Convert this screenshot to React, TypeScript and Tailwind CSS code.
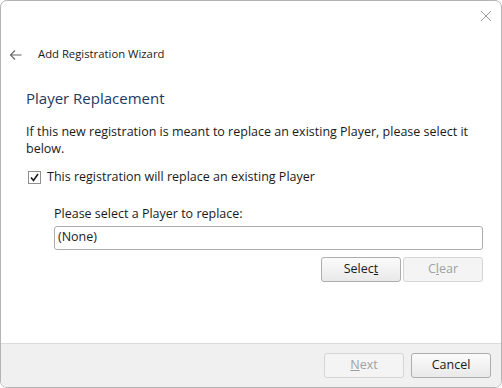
import React, { useState } from 'react';

const font = { fontFamily: '"Open Sans", "Noto Sans", sans-serif' };

const Btn: React.FC<{ children: React.ReactNode; disabled?: boolean }> = ({ children, disabled }) => (
  <button
    className={`w-[80px] h-[25px] rounded-[3px] border text-[12.5px] leading-none flex items-center justify-center ${
      disabled
        ? 'border-[#d5d5d5] bg-[#f4f4f4] text-[#a0a0a0]'
        : 'border-[#adadad] bg-gradient-to-b from-[#fbfbfb] to-[#e9e9e9] text-[#1a1a1a]'
    }`}
  >
    {children}
  </button>
);

export default function App() {
  const [checked, setChecked] = useState(true);

  return (
    <div className="w-[502px] h-[388px] bg-white" style={font}>
      <div className="w-full h-full flex flex-col border border-[#b4b4b4] rounded-t-[7px] rounded-b-[7px] overflow-hidden bg-white">
        {/* caption */}
        <div className="h-[37px] flex justify-end items-start pr-[9px] pt-[9px]">
          <svg width="12" height="12" viewBox="0 0 12 12" className="text-[#9a9a9a]">
            <path d="M1 1 L11 11 M11 1 L1 11" stroke="currentColor" strokeWidth="1" fill="none" />
          </svg>
        </div>

        {/* header */}
        <div className="h-[42px] flex items-center pl-[8px] pb-[9px]">
          <svg width="13" height="12" viewBox="0 0 13 12" className="text-[#666]">
            <path d="M12.5 6 H1.5 M6 1.5 L1.5 6 L6 10.5" stroke="currentColor" strokeWidth="1.1" fill="none" />
          </svg>
          <span className="ml-[16px] text-[11.3px] text-[#1a1a1a]">Add Registration Wizard</span>
        </div>

        {/* body */}
        <div className="flex-1 pl-[25px] pr-[18px]">
          <h2 className="text-[15px] leading-[20px] text-[#1c3a63] pt-[8px]">Player Replacement</h2>

          <p className="mt-[15px] text-[12.5px] leading-[17px] text-[#1a1a1a]">
            If this new registration is meant to replace an existing Player, please select it below.
          </p>

          <label className="mt-[11px] flex items-center gap-[6px] text-[12.5px] text-[#1a1a1a]">
            <span
              onClick={() => setChecked(!checked)}
              className="ml-[2px] w-[13px] h-[13px] border border-[#8f8f8f] bg-white flex items-center justify-center"
            >
              {checked && (
                <svg width="9" height="9" viewBox="0 0 9 9">
                  <path d="M1 4.5 L3.5 7.5 L8 1" stroke="#1a1a1a" strokeWidth="1.6" fill="none" />
                </svg>
              )}
            </span>
            This registration will replace an existing Player
          </label>

          <div className="pl-[28px] mt-[18px]">
            <div className="text-[12.5px] text-[#1a1a1a] leading-[17px]">Please select a Player to replace:</div>
            <div className="mt-[4px] h-[24px] border border-[#acacac] rounded-[3px] flex items-center px-[3px] text-[12.5px] text-[#1a1a1a]">
              (None)
            </div>
            <div className="mt-[7px] flex justify-end gap-[2px]">
              <Btn>
                Selec<span className="underline">t</span>
              </Btn>
              <Btn disabled>
                C<span className="underline">l</span>ear
              </Btn>
            </div>
          </div>
        </div>

        {/* footer */}
        <div className="h-[44px] bg-[#f0f0f0] border-t border-[#dadada] flex items-center justify-end gap-[7px] pr-[10px]">
          <Btn disabled>
            <span className="underline">N</span>ext
          </Btn>
          <Btn>Cancel</Btn>
        </div>
      </div>
    </div>
  );
}
